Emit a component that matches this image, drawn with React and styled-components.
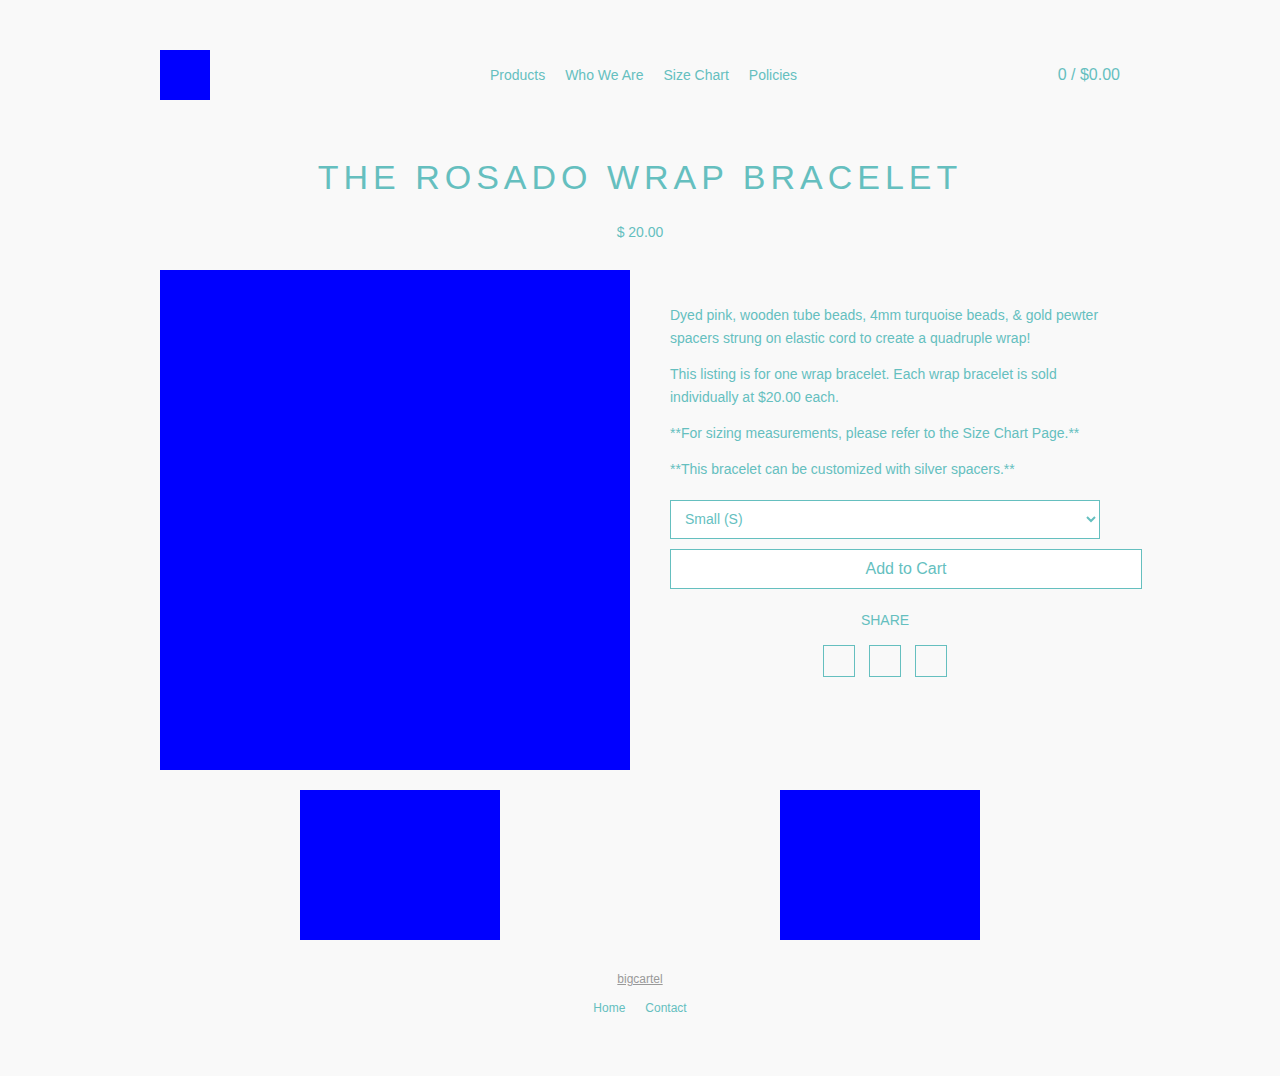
import React from 'react';
import styled, { createGlobalStyle } from 'styled-components';

const teal = '#65bfbf';

const GlobalStyle = createGlobalStyle`
  html, body {
    margin: 0;
    padding: 0;
    background: #f9f9f9;
    font-family: "Liberation Sans", Arial, sans-serif;
    color: ${teal};
  }
`;

const Page = styled.div`
  width: 960px;
  margin: 0 auto;
  padding-top: 50px;
`;

const Header = styled.header`
  display: grid;
  grid-template-columns: 1fr auto 1fr;
  align-items: center;
  height: 50px;
`;

const Logo = styled.div`
  width: 50px;
  height: 50px;
  background: #0000ff;
`;

const Nav = styled.nav`
  display: flex;
  gap: 20px;
  font-size: 14px;
  padding-left: 7px;

  a {
    color: ${teal};
    text-decoration: none;
  }
`;

const Cart = styled.div`
  justify-self: end;
  font-size: 16px;
  margin-top: -1px;
`;

const Title = styled.h1`
  margin: 57px 0 0;
  text-align: center;
  font-size: 34px;
  font-weight: normal;
  letter-spacing: 5px;
  line-height: 40px;
`;

const Price = styled.div`
  text-align: center;
  font-size: 14px;
  margin-top: 27px;
  line-height: 16px;
`;

const Main = styled.div`
  display: flex;
  gap: 40px;
  margin-top: 30px;
`;

const MainImage = styled.div`
  width: 470px;
  height: 500px;
  background: #0000ff;
  flex-shrink: 0;
`;

const Details = styled.div`
  width: 430px;
  padding-top: 34px;
`;

const Para = styled.p`
  margin: 0 0 13px;
  font-size: 14px;
  line-height: 23px;
`;

const Select = styled.select`
  display: block;
  width: 430px;
  height: 39px;
  margin-top: 19px;
  padding: 0 10px 1px;
  border: 1px solid ${teal};
  border-radius: 0;
  background: #fff;
  color: ${teal};
  font-family: "Liberation Sans", Arial, sans-serif;
  font-size: 14px;
  outline: none;
`;

const AddButton = styled.button`
  display: block;
  width: 472px;
  height: 40px;
  margin-top: 10px;
  border: 1px solid ${teal};
  background: #fff;
  color: ${teal};
  font-family: "Liberation Sans", Arial, sans-serif;
  font-size: 16px;
  cursor: pointer;
`;

const Share = styled.div`
  display: flex;
  flex-direction: column;
  align-items: center;
  margin-top: 23px;
  font-size: 14px;
`;

const ShareIcons = styled.div`
  display: flex;
  gap: 14px;
  margin-top: 17px;
`;

const ShareBox = styled.a`
  display: block;
  width: 30px;
  height: 30px;
  border: 1px solid ${teal};
`;

const Thumbs = styled.div`
  display: grid;
  grid-template-columns: 1fr 1fr;
  justify-items: center;
  margin-top: 20px;
`;

const Thumb = styled.div`
  width: 200px;
  height: 150px;
  background: #0000ff;
`;

const Footer = styled.footer`
  display: flex;
  flex-direction: column;
  align-items: center;
  padding: 32px 0 50px;
  font-size: 12px;
`;

const Credit = styled.a`
  color: #999;
  text-decoration: underline;
`;

const FooterNav = styled.div`
  display: flex;
  gap: 20px;
  margin-top: 15px;

  a {
    color: ${teal};
    text-decoration: none;
  }
`;

export default function App() {
  return (
    <>
      <GlobalStyle />
      <Page>
        <Header>
          <Logo />
          <Nav>
            <a href="#">Products</a>
            <a href="#">Who We Are</a>
            <a href="#">Size Chart</a>
            <a href="#">Policies</a>
          </Nav>
          <Cart>0 / $0.00</Cart>
        </Header>

        <Title>THE ROSADO WRAP BRACELET</Title>
        <Price>$ 20.00</Price>

        <Main>
          <MainImage />
          <Details>
            <Para>
              Dyed pink, wooden tube beads, 4mm turquoise beads, &amp; gold pewter spacers strung on
              elastic cord to create a quadruple wrap!
            </Para>
            <Para>
              This listing is for one wrap bracelet. Each wrap bracelet is sold individually at
              $20.00 each.
            </Para>
            <Para>**For sizing measurements, please refer to the Size Chart Page.**</Para>
            <Para>**This bracelet can be customized with silver spacers.**</Para>
            <Select defaultValue="s">
              <option value="s">Small (S)</option>
              <option value="m">Medium (M)</option>
              <option value="l">Large (L)</option>
            </Select>
            <AddButton>Add to Cart</AddButton>
            <Share>
              SHARE
              <ShareIcons>
                <ShareBox href="#" />
                <ShareBox href="#" />
                <ShareBox href="#" />
              </ShareIcons>
            </Share>
          </Details>
        </Main>

        <Thumbs>
          <Thumb />
          <Thumb />
        </Thumbs>

        <Footer>
          <Credit href="#">bigcartel</Credit>
          <FooterNav>
            <a href="#">Home</a>
            <a href="#">Contact</a>
          </FooterNav>
        </Footer>
      </Page>
    </>
  );
}
